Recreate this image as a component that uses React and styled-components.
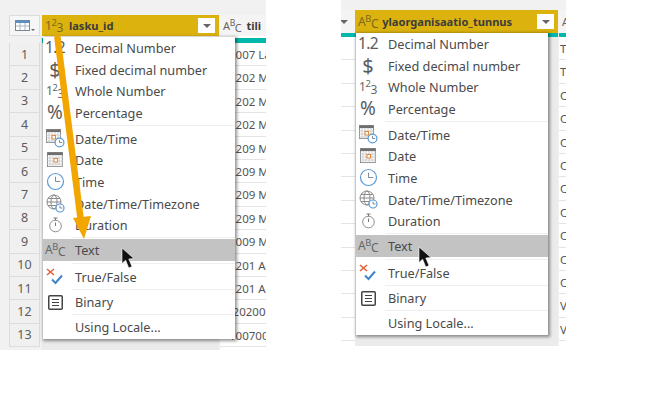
// Power Query column type menu, two screenshots side by side
import React from 'react';
import styled, { createGlobalStyle } from 'styled-components';

const GlobalStyle = createGlobalStyle`
	html, body {
		margin: 0;
		padding: 0;
		background: #fff;
		font-family: "Noto Sans", "Open Sans", sans-serif;
	}
`;

const Page = styled.div`
	display: flex;
	align-items: flex-start;
	gap: 75px;
	width: 649px;
	height: 407px;
	overflow: hidden;
`;

const Panel = styled.div`
	position: relative;
	flex: none;
	display: flex;
	width: ${(props) => props.$width}px;
	height: ${(props) => props.$height}px;
	padding-top: ${(props) => props.$top}px;
	box-sizing: border-box;
	background: #f1f1f1;
	overflow: hidden;
`;

const NumberColumn = styled.div`
	flex: none;
	width: 31px;
	margin: 0 2px 0 9px;
`;

const NumberHead = styled.div`
	display: flex;
	align-items: center;
	justify-content: center;
	height: 21px;
	background: #f6f6f6;
	border: 1px solid #dcdcdc;
	box-sizing: border-box;
`;

const NumberGap = styled.div`
	height: 7px;
`;

const NumberCell = styled.div`
	display: flex;
	align-items: center;
	justify-content: center;
	height: 23.4px;
	box-sizing: border-box;
	border-bottom: 1px solid #dcdcdc;
	border-left: 1px solid #dcdcdc;
	border-right: 1px solid #dcdcdc;
	background: #f0f0f0;
	font-size: 12.5px;
	color: #5c5c5c;
`;

const Column = styled.div`
	flex: ${(props) => (props.$width ? 'none' : '1')};
	width: ${(props) => (props.$width ? `${props.$width}px` : 'auto')};
	min-width: 0;
	background: ${(props) => (props.$selected ? '#ebebeb' : '#fff')};
	margin-right: ${(props) => (props.$selected ? '1px' : '0')};
`;

const Head = styled.div`
	display: flex;
	align-items: center;
	height: ${(props) => props.$height}px;
	padding: 0 4px 0 3px;
	box-sizing: border-box;
	background: ${(props) => (props.$selected ? '#dbb20e' : '#f4f4f4')};
	font-size: 11.1px;
	font-weight: 700;
	color: #3c3c3c;
	white-space: nowrap;
	overflow: hidden;
`;

const StubHead = styled(Head)`
	padding: 0;
`;

const HeadLabel = styled.span`
	flex: 1;
	margin-left: ${(props) => props.$gap}px;
`;

const HeadButton = styled.span`
	flex: none;
	display: flex;
	align-items: center;
	justify-content: center;
	width: 17px;
	height: 15px;
	background: ${(props) => (props.$plain ? 'transparent' : '#fff')};
	margin-left: ${(props) => (props.$plain ? '-6px' : '0')};
	&::after {
		content: '';
		border-left: 4px solid transparent;
		border-right: 4px solid transparent;
		border-top: 4px solid #666;
	}
`;

const HeadGap = styled.div`
	height: ${(props) => props.$height}px;
	background: #fff;
`;

const Strip = styled.div`
	height: ${(props) => props.$height}px;
	background: #01b8aa;
`;

const DataCell = styled.div`
	height: 23.4px;
	line-height: 23px;
	padding-left: ${(props) => props.$pad}px;
	box-sizing: border-box;
	border-bottom: 1px solid #e4e4e4;
	background: #fff;
	font-size: 11.5px;
	color: #555;
	white-space: nowrap;
	overflow: hidden;
`;

const Menu = styled.div`
	position: absolute;
	left: ${(props) => props.$left}px;
	top: ${(props) => props.$top}px;
	width: 192px;
	background: #fff;
	box-shadow: 1px 1px 3px 1px rgba(0, 0, 0, 0.42);
	padding-bottom: 1px;
`;

const Item = styled.div`
	display: flex;
	align-items: center;
	height: 21.7px;
	background: ${(props) => (props.$hover ? '#c3c3c3' : 'transparent')};
	font-size: 12.7px;
	color: #4a4a4a;
`;

const IconSlot = styled.span`
	flex: none;
	display: flex;
	align-items: center;
	justify-content: center;
	width: 24px;
	margin-right: 8px;
	color: #555;
`;

const Label = styled.span`
	white-space: nowrap;
`;

const Sep = styled.div`
	height: ${(props) => props.$height || 4}px;
	display: flex;
	align-items: center;
	padding-left: 29px;
	&::after {
		content: '';
		flex: 1;
		height: 1px;
		background: #efefef;
	}
`;

const GlyphText = styled.span`
	font-size: ${(props) => props.$size}px;
	line-height: 1;
	letter-spacing: ${(props) => props.$tight || 0}px;
	color: #5a5a5a;
`;

const TypeGlyph = styled.span`
	display: inline-flex;
	align-items: baseline;
	font-size: ${(props) => props.$size || 13}px;
	line-height: 1;
	font-weight: 400;
	letter-spacing: -0.4px;
	color: ${(props) => props.$color || '#666'};
`;

const Sup = styled.span`
	font-size: 0.78em;
	position: relative;
	top: -0.4em;
`;

const Sub = styled.span`
	position: relative;
	top: 0.2em;
`;

const Overlay = styled.svg`
	position: absolute;
	left: 0;
	top: 0;
	pointer-events: none;
`;

const Whole = ({ size, color }) => (
	<TypeGlyph $size={size} $color={color}>1<Sup>2</Sup><Sub>3</Sub></TypeGlyph>
);

const Abc = ({ size, color }) => (
	<TypeGlyph $size={size} $color={color}>A<Sup>B</Sup><Sub>C</Sub></TypeGlyph>
);

const TableIcon = () => (
	<svg width="20" height="12" viewBox="0 0 20 12">
		<rect x="0.5" y="0.5" width="14" height="10" fill="#fff" stroke="#7a8794" />
		<rect x="0.5" y="0.5" width="14" height="2.5" fill="#5b8fc4" />
		<path d="M5 3v7M10 3v7M1 6h13" stroke="#a9b4be" />
		<path d="M16 9h4l-2 2z" fill="#666" />
	</svg>
);

const Clock = ({ x, y, r }) => (
	<g>
		<circle cx={x} cy={y} r={r} fill="#fff" stroke="#5b9bd5" strokeWidth="1.2" />
		<path d={`M${x} ${y - r * 0.6}V${y}H${x + r * 0.6}`} fill="none" stroke="#6f7f8d" strokeWidth="0.9" />
	</g>
);

const Calendar = ({ w, h }) => {
	const cols = [];
	for (let x = 3; x < w; x += 3) cols.push(`M${x} 3V${h}`);
	for (let y = 6; y < h; y += 3) cols.push(`M0 ${y}H${w}`);
	return (
		<g>
			<rect x="0.5" y="0.5" width={w - 1} height={h - 1} fill="#fff" stroke="#8c8c8c" />
			<rect x="0.5" y="0.5" width={w - 1} height="2.6" fill="#6e6e6e" />
			<path d={cols.join('')} stroke="#c4c4c4" strokeWidth="0.8" />
			<rect x={w - 9} y="6.5" width="3.5" height="3.5" fill="#fff" stroke="#e08a3c" />
		</g>
	);
};

const DateTimeIcon = () => (
	<svg width="19" height="19" viewBox="0 0 19 19">
		<Calendar w={15} h={14} />
		<Clock x={13.5} y={13.5} r={4.4} />
	</svg>
);

const DateIcon = () => (
	<svg width="17" height="17" viewBox="0 0 17 17">
		<Calendar w={16} h={15} />
	</svg>
);

const TimeIcon = () => (
	<svg width="19" height="19" viewBox="0 0 19 19">
		<Clock x={9.5} y={9.5} r={8} />
	</svg>
);

const ZoneIcon = () => (
	<svg width="19" height="19" viewBox="0 0 19 19" fill="none">
		<circle cx="8" cy="8" r="7" stroke="#8a8a8a" />
		<ellipse cx="8" cy="8" rx="3" ry="7" stroke="#8a8a8a" />
		<path d="M1 8h14M2 4.5h12M2 11.5h12" stroke="#8a8a8a" />
		<Clock x={14} y={14} r={4} />
	</svg>
);

const DurationIcon = () => (
	<svg width="15" height="16" viewBox="0 0 15 16" fill="none">
		<circle cx="7.5" cy="9" r="5.8" stroke="#8d8d8d" />
		<path d="M5.5 1h4M7.5 1v2.5M7.5 9V5.5" stroke="#777" />
	</svg>
);

const BoolIcon = () => (
	<svg width="18" height="18" viewBox="0 0 18 18" fill="none">
		<path d="M1 1l7 6M8 1L1 7" stroke="#e2603a" strokeWidth="1.6" />
		<path d="M6 11.5l3.5 3.5L16 7.5" stroke="#3f86c8" strokeWidth="2" />
	</svg>
);

const BinaryIcon = () => (
	<svg width="15" height="15" viewBox="0 0 15 15" fill="none">
		<rect x="0.75" y="0.75" width="13.5" height="13.5" rx="1" stroke="#444" strokeWidth="1.5" />
		<path d="M4 4.5h7M4 7.5h7M4 10.5h7" stroke="#444" strokeWidth="1.2" />
	</svg>
);

const Cursor = ({ x, y }) => (
	<path
		transform={`translate(${x} ${y})`}
		d="M0 0L0 15.5L3.6 12.2L6.8 20L10 18.6L6.8 11L12 10.6Z"
		fill="#111"
		stroke="#fff"
		strokeWidth="0.6"
	/>
);

const TypeMenu = ({ left, top }) => (
	<Menu $left={left} $top={top}>
		<Item><IconSlot><GlyphText $size={15.5} $tight={-0.6}>1.2</GlyphText></IconSlot><Label>Decimal Number</Label></Item>
		<Item><IconSlot><GlyphText $size={20}>$</GlyphText></IconSlot><Label>Fixed decimal number</Label></Item>
		<Item><IconSlot><Whole size={12} /></IconSlot><Label>Whole Number</Label></Item>
		<Item><IconSlot><GlyphText $size={19}>%</GlyphText></IconSlot><Label>Percentage</Label></Item>
		<Sep />
		<Item><IconSlot><DateTimeIcon /></IconSlot><Label>Date/Time</Label></Item>
		<Item><IconSlot><DateIcon /></IconSlot><Label>Date</Label></Item>
		<Item><IconSlot><TimeIcon /></IconSlot><Label>Time</Label></Item>
		<Item><IconSlot><ZoneIcon /></IconSlot><Label>Date/Time/Timezone</Label></Item>
		<Item><IconSlot><DurationIcon /></IconSlot><Label>Duration</Label></Item>
		<Sep $height={3} />
		<Item $hover><IconSlot><Abc size={12} /></IconSlot><Label>Text</Label></Item>
		<Sep $height={5} />
		<Item><IconSlot><BoolIcon /></IconSlot><Label>True/False</Label></Item>
		<Sep />
		<Item><IconSlot><BinaryIcon /></IconSlot><Label>Binary</Label></Item>
		<Sep $height={3} />
		<Item><IconSlot /><Label>Using Locale...</Label></Item>
	</Menu>
);

const LEFT_ROWS = [
	'2007 Lä', '2202 M', '2202 M', '2202 M', '2209 M', '2209 M', '2209 M',
	'2209 M', '2009 M', '2201 As', '2201 As', '1202000', '1007000',
];

const RIGHT_ROWS = ['T', 'T', 'C', 'C', 'C', 'C', 'C', 'C', 'C', 'C', 'C', 'V', 'V'];

const App = () => (
	<Page>
		<GlobalStyle />

		<Panel $width={266} $height={350} $top={15}>
			<NumberColumn>
				<NumberHead><TableIcon /></NumberHead>
				<NumberGap />
				{LEFT_ROWS.map((row, index) => (
					<NumberCell key={`num-${index + 1}`}>{index + 1}</NumberCell>
				))}
			</NumberColumn>
			<Column $selected $width={177}>
				<Head $selected $height={21}>
					<Whole size={12} color="#7c6a1c" />
					<HeadLabel $gap={6}>lasku_id</HeadLabel>
					<HeadButton />
				</Head>
				<HeadGap $height={2} />
				<Strip $height={5} />
			</Column>
			<Column>
				<Head $height={21}>
					<Abc size={11} />
					<HeadLabel $gap={5}>tili</HeadLabel>
				</Head>
				<HeadGap $height={2} />
				<Strip $height={5} />
				{LEFT_ROWS.map((row, index) => (
					<DataCell key={`left-${index + 1}`} $pad={index === 11 ? 6 : 9}>{row}</DataCell>
				))}
			</Column>
			<TypeMenu left={43} top={37} />
			<Overlay width="266" height="350" viewBox="0 0 266 350">
				<path d="M57.5 38L81 222" stroke="#f2a600" strokeWidth="6.5" strokeLinecap="round" />
				<path d="M73 218L91 216L84 239Z" fill="#f2a600" />
				<Cursor x={122} y={248} />
			</Overlay>
		</Panel>

		<Panel $width={225} $height={346} $top={10}>
			<Column $width={14}>
				<StubHead $height={23}>
					<HeadButton $plain />
				</StubHead>
				<Strip $height={4} />
				{RIGHT_ROWS.map((row, index) => (
					<DataCell key={`stub-${index + 1}`} $pad={0} />
				))}
			</Column>
			<Column $selected $width={203}>
				<Head $selected $height={23}>
					<Abc size={12} color="#7c6a1c" />
					<HeadLabel $gap={4}>ylaorganisaatio_tunnus</HeadLabel>
					<HeadButton />
				</Head>
				<Strip $height={4} />
			</Column>
			<Column>
				<Head $height={23}>
					<TypeGlyph $size={11}>A</TypeGlyph>
				</Head>
				<Strip $height={4} />
				{RIGHT_ROWS.map((row, index) => (
					<DataCell key={`right-${index + 1}`} $pad={1}>{row}</DataCell>
				))}
			</Column>
			<TypeMenu left={15} top={33} />
			<Overlay width="225" height="346" viewBox="0 0 225 346">
				<Cursor x={78} y={247} />
			</Overlay>
		</Panel>
	</Page>
);

export default App;
